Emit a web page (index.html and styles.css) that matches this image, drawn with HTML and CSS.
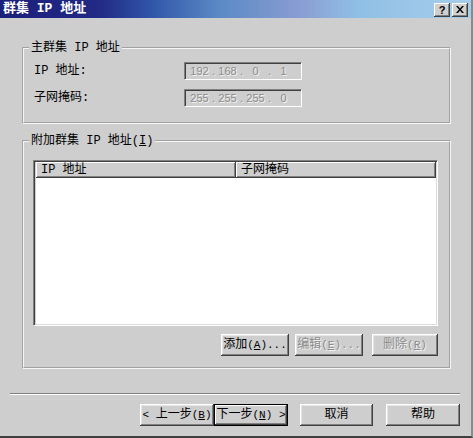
FILE: index.html
```html
<!DOCTYPE html>
<html>
<head>
<meta charset="utf-8">
<link rel="stylesheet" href="styles.css">
</head>
<body>
<div class="window">
  <div class="titlebar">
    <span class="title">群集 IP 地址</span>
    <div class="tbtns">
      <span class="tbtn help">?</span>
      <span class="tbtn close"><svg width="8" height="7" viewBox="0 0 8 7"><path d="M0 0h2l2 2.5L6 0h2L5 3.5 8 7H6L4 4.5 2 7H0l3-3.5z" fill="#000"/></svg></span>
    </div>
  </div>
  <div class="body">
    <fieldset class="group g1">
      <legend>主群集 IP 地址</legend>
      <div class="g1-inner">
        <div class="row">
          <span class="lbl">IP 地址:</span>
          <div class="ipbox"><span>192</span><i>.</i><span>168</span><i>.</i><span>0</span><i>.</i><span>1</span></div>
        </div>
        <div class="row">
          <span class="lbl">子网掩码:</span>
          <div class="ipbox"><span>255</span><i>.</i><span>255</span><i>.</i><span>255</span><i>.</i><span>0</span></div>
        </div>
      </div>
    </fieldset>
    <fieldset class="group g2">
      <legend>附加群集 IP 地址(<u>I</u>)</legend>
      <div class="g2-inner">
        <div class="list">
          <div class="lhead">
            <div class="hcell c1">IP 地址</div>
            <div class="hcell c2">子网掩码</div>
          </div>
          <div class="lbody"></div>
        </div>
        <div class="btnrow">
          <button class="btn b-add"><span class="t">添加<span class="h">(<u>A</u>)...</span></span></button>
          <button class="btn b-edit dis"><span class="t">编辑<span class="h">(<u>E</u>)...</span></span></button>
          <button class="btn b-del dis"><span class="t">删除<span class="h">(<u>R</u>)</span></span></button>
        </div>
      </div>
    </fieldset>
    <div class="sep"></div>
    <div class="footer">
      <button class="btn fb"><span class="t"><span class="h">&lt; </span>上一步<span class="h">(<u>B</u>)</span></span></button>
      <button class="btn fb def"><span class="t">下一步<span class="h">(<u>N</u>) &gt;</span></span></button>
      <button class="btn fb cancel"><span class="t">取消</span></button>
      <button class="btn fb helpb"><span class="t">帮助</span></button>
    </div>
  </div>
</div>
</body>
</html>
```

FILE: styles.css
```css
* { box-sizing: border-box; }
html, body { margin: 0; padding: 0; background: #cecece; }
body {
  font-family: "Liberation Mono", "Noto Sans CJK SC", monospace;
  font-size: 12px;
  line-height: 14px;
  color: #000;
}
.window {
  width: 473px;
  height: 438px;
  background: #cecece;
  border-bottom: 2px solid #404040;
  border-right: 2px solid #8a8a8a;
  display: flex;
  flex-direction: column;
}
.titlebar {
  height: 18px;
  flex: none;
  display: flex;
  align-items: center;
  justify-content: space-between;
  padding: 0 3px 0 3px;
  background: linear-gradient(to right, #1a1f7a 0px, #222a86 100px, #3055a8 150px, #5b8ac6 220px, #8a9dd2 300px, #90c0e6 360px, #a6cdea 470px);
}
.title {
  color: #fff;
  font-weight: bold;
  font-size: 13px;
}
.tbtns { display: flex; gap: 2px; margin-top: 1px; }
.tbtn {
  width: 16px;
  height: 14px;
  background: #d0d0d0;
  box-shadow: inset -1px -1px #404040, inset 1px 1px #fff, inset -2px -2px #808080;
  display: flex;
  align-items: center;
  justify-content: center;
  font-weight: bold;
  font-size: 11px;
  line-height: 12px;
  font-family: "Liberation Sans", sans-serif;
}
.body { flex: 1; display: flex; flex-direction: column; }
.group {
  margin: 0 0 0 22px;
  width: 429px;
  padding: 0;
  min-width: 0;
  border: 2px groove #f6f6f6;
}
.group legend {
  padding: 0 2px;
  margin-left: 5px;
  line-height: 14px;
}
.g1 { margin-top: 23px; height: 83px; }
.g1-inner {
  padding: 7px 0 0 10px;
  display: flex;
  flex-direction: column;
  gap: 9px;
}
.row { display: flex; align-items: center; height: 18px; }
.lbl { width: 150px; }
.ipbox {
  width: 118px;
  height: 18px;
  border-top: 1px solid #808080;
  border-left: 1px solid #808080;
  border-right: 1px solid #fff;
  border-bottom: 1px solid #fff;
  box-shadow: inset 1px 1px #404040;
  display: flex;
  align-items: center;
  padding-left: 5px;
  color: #8c8c8c;
  text-shadow: 1px 1px 0 #f4f4f4;
  font-family: "Liberation Sans", sans-serif;
  font-size: 11px;
}
.ipbox span { width: 19px; text-align: center; }
.ipbox i { font-style: normal; width: 9px; text-align: center; }
.g2 { margin-top: 10px; height: 235px; }
.g2-inner {
  padding: 12px 11px 0 9px;
  display: flex;
  flex-direction: column;
}
.list {
  height: 166px;
  border-top: 1px solid #808080;
  border-left: 1px solid #808080;
  border-right: 1px solid #fff;
  border-bottom: 1px solid #fff;
  box-shadow: inset 1px 1px #404040, inset -1px -1px #dcdcdc;
  display: flex;
  flex-direction: column;
  padding: 1px 1px 1px 2px;
}
.lhead { display: flex; height: 16px; flex: none; }
.hcell {
  background: #cecece;
  box-shadow: inset -1px -1px #404040, inset 1px 1px #fff, inset -2px -2px #808080;
  padding-left: 5px;
  line-height: 16px;
  height: 16px;
}
.c1 { width: 200px; }
.c2 { flex: 1; }
.lbody { flex: 1; background: #fff; }
.btn {
  font-family: inherit;
  font-size: 12px;
  line-height: 14px;
  height: 22px;
  padding: 0;
  border: none;
  background: #cecece;
  color: #000;
  box-shadow: inset -1px -1px #404040, inset 1px 1px #fff, inset -2px -2px #808080, inset 2px 2px #e6e6e6;
  display: flex;
  align-items: center;
  justify-content: center;
  white-space: pre;
}
.btn .t { display: inline; }
.btn .h { font-size: 11px; }
.btn u { text-decoration: underline; }
.btn.dis { color: #8c8c8c; text-shadow: 1px 1px 0 #f4f4f4; }
.btnrow {
  display: flex;
  justify-content: flex-end;
  margin-top: 8px;
}
.b-add { width: 68px; }
.b-edit { width: 68px; margin-left: 6px; }
.b-del { width: 66px; margin-left: 9px; }
.sep {
  margin: 24px 11px 0 10px;
  height: 2px;
  border-top: 1px solid #808080;
  border-bottom: 1px solid #fff;
}
.footer {
  display: flex;
  margin-top: 9px;
  padding-left: 140px;
}
.fb { width: 74px; }
.def {
  box-shadow: inset 0 0 0 1px #000, inset -2px -2px #404040, inset 2px 2px #fff, inset -3px -3px #808080;
}
.cancel { margin-left: 12px; width: 73px; }
.helpb { margin-left: 13px; }
```
